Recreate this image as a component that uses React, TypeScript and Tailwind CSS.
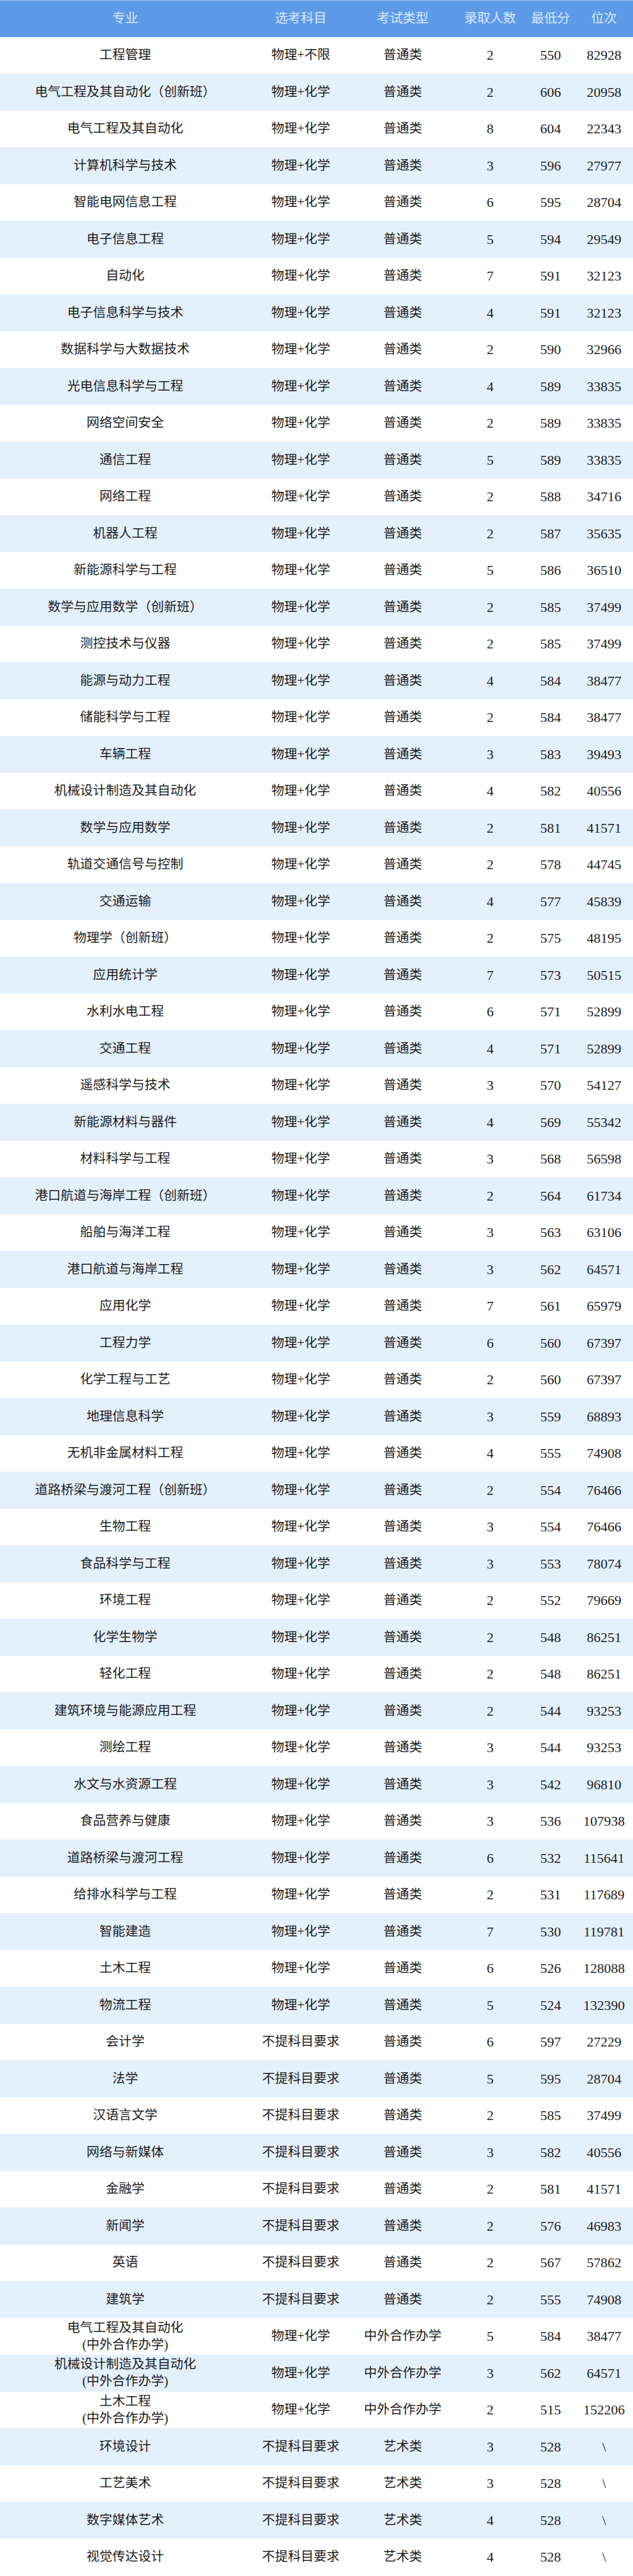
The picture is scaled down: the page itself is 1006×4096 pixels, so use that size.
type Row = [string, string, string, string, string, string];

const rows: Row[] = [
  ['工程管理', '物理+不限', '普通类', '2', '550', '82928'],
  ['电气工程及其自动化（创新班）', '物理+化学', '普通类', '2', '606', '20958'],
  ['电气工程及其自动化', '物理+化学', '普通类', '8', '604', '22343'],
  ['计算机科学与技术', '物理+化学', '普通类', '3', '596', '27977'],
  ['智能电网信息工程', '物理+化学', '普通类', '6', '595', '28704'],
  ['电子信息工程', '物理+化学', '普通类', '5', '594', '29549'],
  ['自动化', '物理+化学', '普通类', '7', '591', '32123'],
  ['电子信息科学与技术', '物理+化学', '普通类', '4', '591', '32123'],
  ['数据科学与大数据技术', '物理+化学', '普通类', '2', '590', '32966'],
  ['光电信息科学与工程', '物理+化学', '普通类', '4', '589', '33835'],
  ['网络空间安全', '物理+化学', '普通类', '2', '589', '33835'],
  ['通信工程', '物理+化学', '普通类', '5', '589', '33835'],
  ['网络工程', '物理+化学', '普通类', '2', '588', '34716'],
  ['机器人工程', '物理+化学', '普通类', '2', '587', '35635'],
  ['新能源科学与工程', '物理+化学', '普通类', '5', '586', '36510'],
  ['数学与应用数学（创新班）', '物理+化学', '普通类', '2', '585', '37499'],
  ['测控技术与仪器', '物理+化学', '普通类', '2', '585', '37499'],
  ['能源与动力工程', '物理+化学', '普通类', '4', '584', '38477'],
  ['储能科学与工程', '物理+化学', '普通类', '2', '584', '38477'],
  ['车辆工程', '物理+化学', '普通类', '3', '583', '39493'],
  ['机械设计制造及其自动化', '物理+化学', '普通类', '4', '582', '40556'],
  ['数学与应用数学', '物理+化学', '普通类', '2', '581', '41571'],
  ['轨道交通信号与控制', '物理+化学', '普通类', '2', '578', '44745'],
  ['交通运输', '物理+化学', '普通类', '4', '577', '45839'],
  ['物理学（创新班）', '物理+化学', '普通类', '2', '575', '48195'],
  ['应用统计学', '物理+化学', '普通类', '7', '573', '50515'],
  ['水利水电工程', '物理+化学', '普通类', '6', '571', '52899'],
  ['交通工程', '物理+化学', '普通类', '4', '571', '52899'],
  ['遥感科学与技术', '物理+化学', '普通类', '3', '570', '54127'],
  ['新能源材料与器件', '物理+化学', '普通类', '4', '569', '55342'],
  ['材料科学与工程', '物理+化学', '普通类', '3', '568', '56598'],
  ['港口航道与海岸工程（创新班）', '物理+化学', '普通类', '2', '564', '61734'],
  ['船舶与海洋工程', '物理+化学', '普通类', '3', '563', '63106'],
  ['港口航道与海岸工程', '物理+化学', '普通类', '3', '562', '64571'],
  ['应用化学', '物理+化学', '普通类', '7', '561', '65979'],
  ['工程力学', '物理+化学', '普通类', '6', '560', '67397'],
  ['化学工程与工艺', '物理+化学', '普通类', '2', '560', '67397'],
  ['地理信息科学', '物理+化学', '普通类', '3', '559', '68893'],
  ['无机非金属材料工程', '物理+化学', '普通类', '4', '555', '74908'],
  ['道路桥梁与渡河工程（创新班）', '物理+化学', '普通类', '2', '554', '76466'],
  ['生物工程', '物理+化学', '普通类', '3', '554', '76466'],
  ['食品科学与工程', '物理+化学', '普通类', '3', '553', '78074'],
  ['环境工程', '物理+化学', '普通类', '2', '552', '79669'],
  ['化学生物学', '物理+化学', '普通类', '2', '548', '86251'],
  ['轻化工程', '物理+化学', '普通类', '2', '548', '86251'],
  ['建筑环境与能源应用工程', '物理+化学', '普通类', '2', '544', '93253'],
  ['测绘工程', '物理+化学', '普通类', '3', '544', '93253'],
  ['水文与水资源工程', '物理+化学', '普通类', '3', '542', '96810'],
  ['食品营养与健康', '物理+化学', '普通类', '3', '536', '107938'],
  ['道路桥梁与渡河工程', '物理+化学', '普通类', '6', '532', '115641'],
  ['给排水科学与工程', '物理+化学', '普通类', '2', '531', '117689'],
  ['智能建造', '物理+化学', '普通类', '7', '530', '119781'],
  ['土木工程', '物理+化学', '普通类', '6', '526', '128088'],
  ['物流工程', '物理+化学', '普通类', '5', '524', '132390'],
  ['会计学', '不提科目要求', '普通类', '6', '597', '27229'],
  ['法学', '不提科目要求', '普通类', '5', '595', '28704'],
  ['汉语言文学', '不提科目要求', '普通类', '2', '585', '37499'],
  ['网络与新媒体', '不提科目要求', '普通类', '3', '582', '40556'],
  ['金融学', '不提科目要求', '普通类', '2', '581', '41571'],
  ['新闻学', '不提科目要求', '普通类', '2', '576', '46983'],
  ['英语', '不提科目要求', '普通类', '2', '567', '57862'],
  ['建筑学', '不提科目要求', '普通类', '2', '555', '74908'],
  ['电气工程及其自动化\n(中外合作办学)', '物理+化学', '中外合作办学', '5', '584', '38477'],
  ['机械设计制造及其自动化\n(中外合作办学)', '物理+化学', '中外合作办学', '3', '562', '64571'],
  ['土木工程\n(中外合作办学)', '物理+化学', '中外合作办学', '2', '515', '152206'],
  ['环境设计', '不提科目要求', '艺术类', '3', '528', '\\'],
  ['工艺美术', '不提科目要求', '艺术类', '3', '528', '\\'],
  ['数字媒体艺术', '不提科目要求', '艺术类', '4', '528', '\\'],
  ['视觉传达设计', '不提科目要求', '艺术类', '4', '528', '\\'],
];

const headers = ['专业', '选考科目', '考试类型', '录取人数', '最低分', '位次'];

const grid = 'grid grid-cols-[398px_160px_164px_114px_78px_92px] h-[58.51px] items-center text-center';

export default function App() {
  return (
    <div className="w-[1006px] bg-white font-['Liberation_Serif','Noto_Sans_CJK_SC',serif]">
      <div className={`${grid} bg-[#5d9be9] text-[#dae8fb] text-[20.5px] border-t border-[#9cc2f1]`}>
        {headers.map((h) => (
          <div key={h}>{h}</div>
        ))}
      </div>

      {rows.map((r, i) => (
        <div
          key={i}
          className={`${grid} text-[#1c1c1c] ${i % 2 === 1 ? 'bg-[#e4f0fc]' : 'bg-white'}`}
        >
          <div className="text-[20.5px] leading-[27px] whitespace-pre-line">{r[0]}</div>
          <div className="text-[20.5px]">{r[1]}</div>
          <div className="text-[20.5px]">{r[2]}</div>
          <div className="text-[22px]">{r[3]}</div>
          <div className="text-[22px]">{r[4]}</div>
          <div className="text-[22px]">{r[5]}</div>
        </div>
      ))}
    </div>
  );
}
